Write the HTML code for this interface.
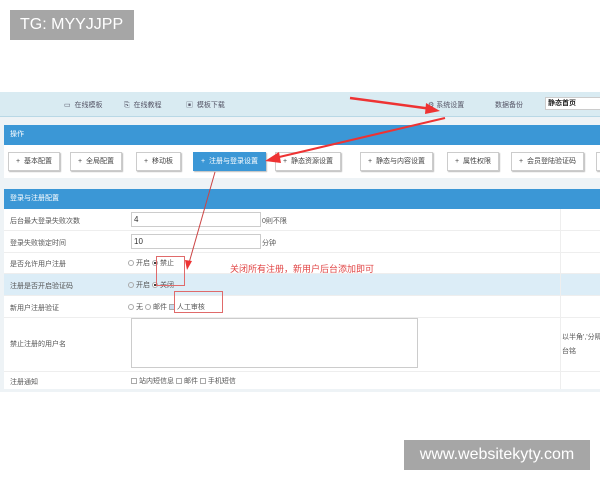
<!DOCTYPE html>
<html><head><meta charset="utf-8"><style>
*{margin:0;padding:0;box-sizing:border-box}
body{width:600px;height:480px;background:#fff;position:relative;overflow:hidden;font-family:"Liberation Sans","Noto Sans CJK SC",sans-serif;font-size:7px;color:#555}
.a{position:absolute}
.tg{left:10px;top:10px;width:124px;height:30px;background:#a6a6a6;color:#fff;font-size:16px;line-height:30px;padding-left:10px}
.wm{left:404px;top:440px;width:186px;height:30px;background:#a6a6a6;color:#fff;font-size:16px;line-height:30px;text-align:center}
.nav{left:0;top:92px;width:600px;height:25px;background:#d9ebf2;border-bottom:1px solid #b9d8e6}
.nav span{position:absolute;top:8px;color:#556}
.bg{left:0;top:117px;width:600px;height:275px;background:#eef3f6}
.bar{left:4px;width:596px;height:20px;background:#3b97d6;color:#fff;line-height:20px;padding-left:6px;font-size:7px}
.btns{left:4px;top:145px;width:596px;height:33px;background:#fff}
.btn{position:absolute;top:152px;height:19px;background:#fff;border:1px solid #ccc;box-shadow:1px 1px 1px #bbb;line-height:17px;padding:0 7px;color:#444;white-space:nowrap}
.btn.on{background:#3b97d6;color:#fff;border-color:#3b97d6}
.row{position:absolute;left:4px;width:596px;background:#fff;border-bottom:1px solid #eee}
.row .l{position:absolute;left:6px;color:#555}
.row .v{position:absolute;left:124px;color:#555;white-space:nowrap}
.inp{position:absolute;left:127px;width:130px;height:15px;border:1px solid #ccc;background:#fff;font-size:8px;padding-left:2px;line-height:13px;color:#333}
.rd{display:inline-block;width:6px;height:6px;border:1px solid #aaa;border-radius:50%;vertical-align:-1px;margin-right:2px}
.rd.s{background:radial-gradient(#333 35%,#fff 45%)}
.cb{display:inline-block;width:6px;height:6px;border:1px solid #aaa;vertical-align:-1px;margin-right:2px}
</style></head><body>
<div class="a tg">TG: MYYJJPP</div>
<div class="a nav">
<span style="left:64px">▭&nbsp;&nbsp;在线模板</span>
<span style="left:124px">⎘&nbsp;&nbsp;在线教程</span>
<span style="left:186px">▣&nbsp;&nbsp;模板下载</span>
<span style="left:428px">⚙&nbsp;系统设置</span>
<span style="left:495px">数据备份</span>
<span style="left:545px;top:5px;width:60px;height:13px;background:#fff;border:1px solid #ccc;color:#222;padding-left:2px;line-height:11px;font-weight:bold">静态首页</span>
</div>
<div class="a bg"></div>
<div class="a bar" style="top:125px">操作</div>
<div class="a btns"></div>
<div class="btn" style="left:8px">+&nbsp; 基本配置</div>
<div class="btn" style="left:70px">+&nbsp; 全局配置</div>
<div class="btn" style="left:136px">+&nbsp; 移动板</div>
<div class="btn on" style="left:193px">+&nbsp; 注册与登录设置</div>
<div class="btn" style="left:275px">+&nbsp; 静态资源设置</div>
<div class="btn" style="left:360px">+&nbsp; 静态与内容设置</div>
<div class="btn" style="left:447px">+&nbsp; 属性权限</div>
<div class="btn" style="left:511px">+&nbsp; 会员登陆验证码</div>
<div class="btn" style="left:596px">+</div>
<div class="a bar" style="top:189px">登录与注册配置</div>
<div class="row" style="top:209px;height:22px"><span class="l" style="top:7px">后台最大登录失败次数</span><div class="inp" style="top:3px">4</div><span class="v" style="left:258px;top:7px">0則不限</span></div>
<div class="row" style="top:231px;height:22px"><span class="l" style="top:7px">登录失败锁定时间</span><div class="inp" style="top:3px">10</div><span class="v" style="left:258px;top:7px">分钟</span></div>
<div class="row" style="top:253px;height:21px"><span class="l" style="top:6px">是否允许用户注册</span><span class="v" style="top:5px"><i class="rd"></i>开启 <i class="rd s"></i>禁止</span></div>
<div class="row" style="top:274px;height:22px;background:#dcedf7"><span class="l" style="top:7px">注册是否开启验证码</span><span class="v" style="top:6px"><i class="rd"></i>开启 <i class="rd s"></i>关闭</span></div>
<div class="row" style="top:296px;height:22px"><span class="l" style="top:7px">新用户注册验证</span><span class="v" style="top:6px"><i class="rd"></i>无 <i class="rd"></i>邮件 <i class="cb" style="background:#cde"></i>人工审核</span></div>
<div class="row" style="top:318px;height:54px"><span class="l" style="top:21px">禁止注册的用户名</span><div class="inp" style="top:0;width:287px;height:50px"></div><span class="v" style="left:558px;top:14px">以半角','分隔</span><span class="v" style="left:558px;top:28px">台铭</span></div>
<div class="row" style="top:372px;height:17px;border:0"><span class="l" style="top:5px">注册通知</span><span class="v" style="left:127px;top:4px"><i class="cb"></i>站内短信息 <i class="cb"></i>邮件 <i class="cb"></i>手机短信</span></div>
<div class="a" style="left:560px;top:209px;width:1px;height:180px;background:#eee"></div>
<div class="a" style="left:156px;top:256px;width:29px;height:30px;border:1px solid #e06a6a"></div>
<div class="a" style="left:174px;top:291px;width:49px;height:22px;border:1px solid #e06a6a"></div>
<div class="a" style="left:230px;top:262px;color:#e04444;font-size:9px">关闭所有注册，新用户后台添加即可</div>
<svg class="a" style="left:0;top:0" width="600" height="480">
<line x1="350" y1="98" x2="432" y2="109" stroke="#e33" stroke-width="2.5"/>
<polygon points="440,111 426,103 425,114" fill="#e33"/>
<line x1="445" y1="118" x2="275" y2="158" stroke="#e33" stroke-width="2"/>
<polygon points="265,161 279,152 281,163" fill="#e33"/>
<line x1="215" y1="172" x2="189" y2="263" stroke="#c44" stroke-width="1"/>
<polygon points="187,270 185,260 192,261" fill="#e33"/>
</svg>
<div class="a wm">www.websitekyty.com</div>
</body></html>
